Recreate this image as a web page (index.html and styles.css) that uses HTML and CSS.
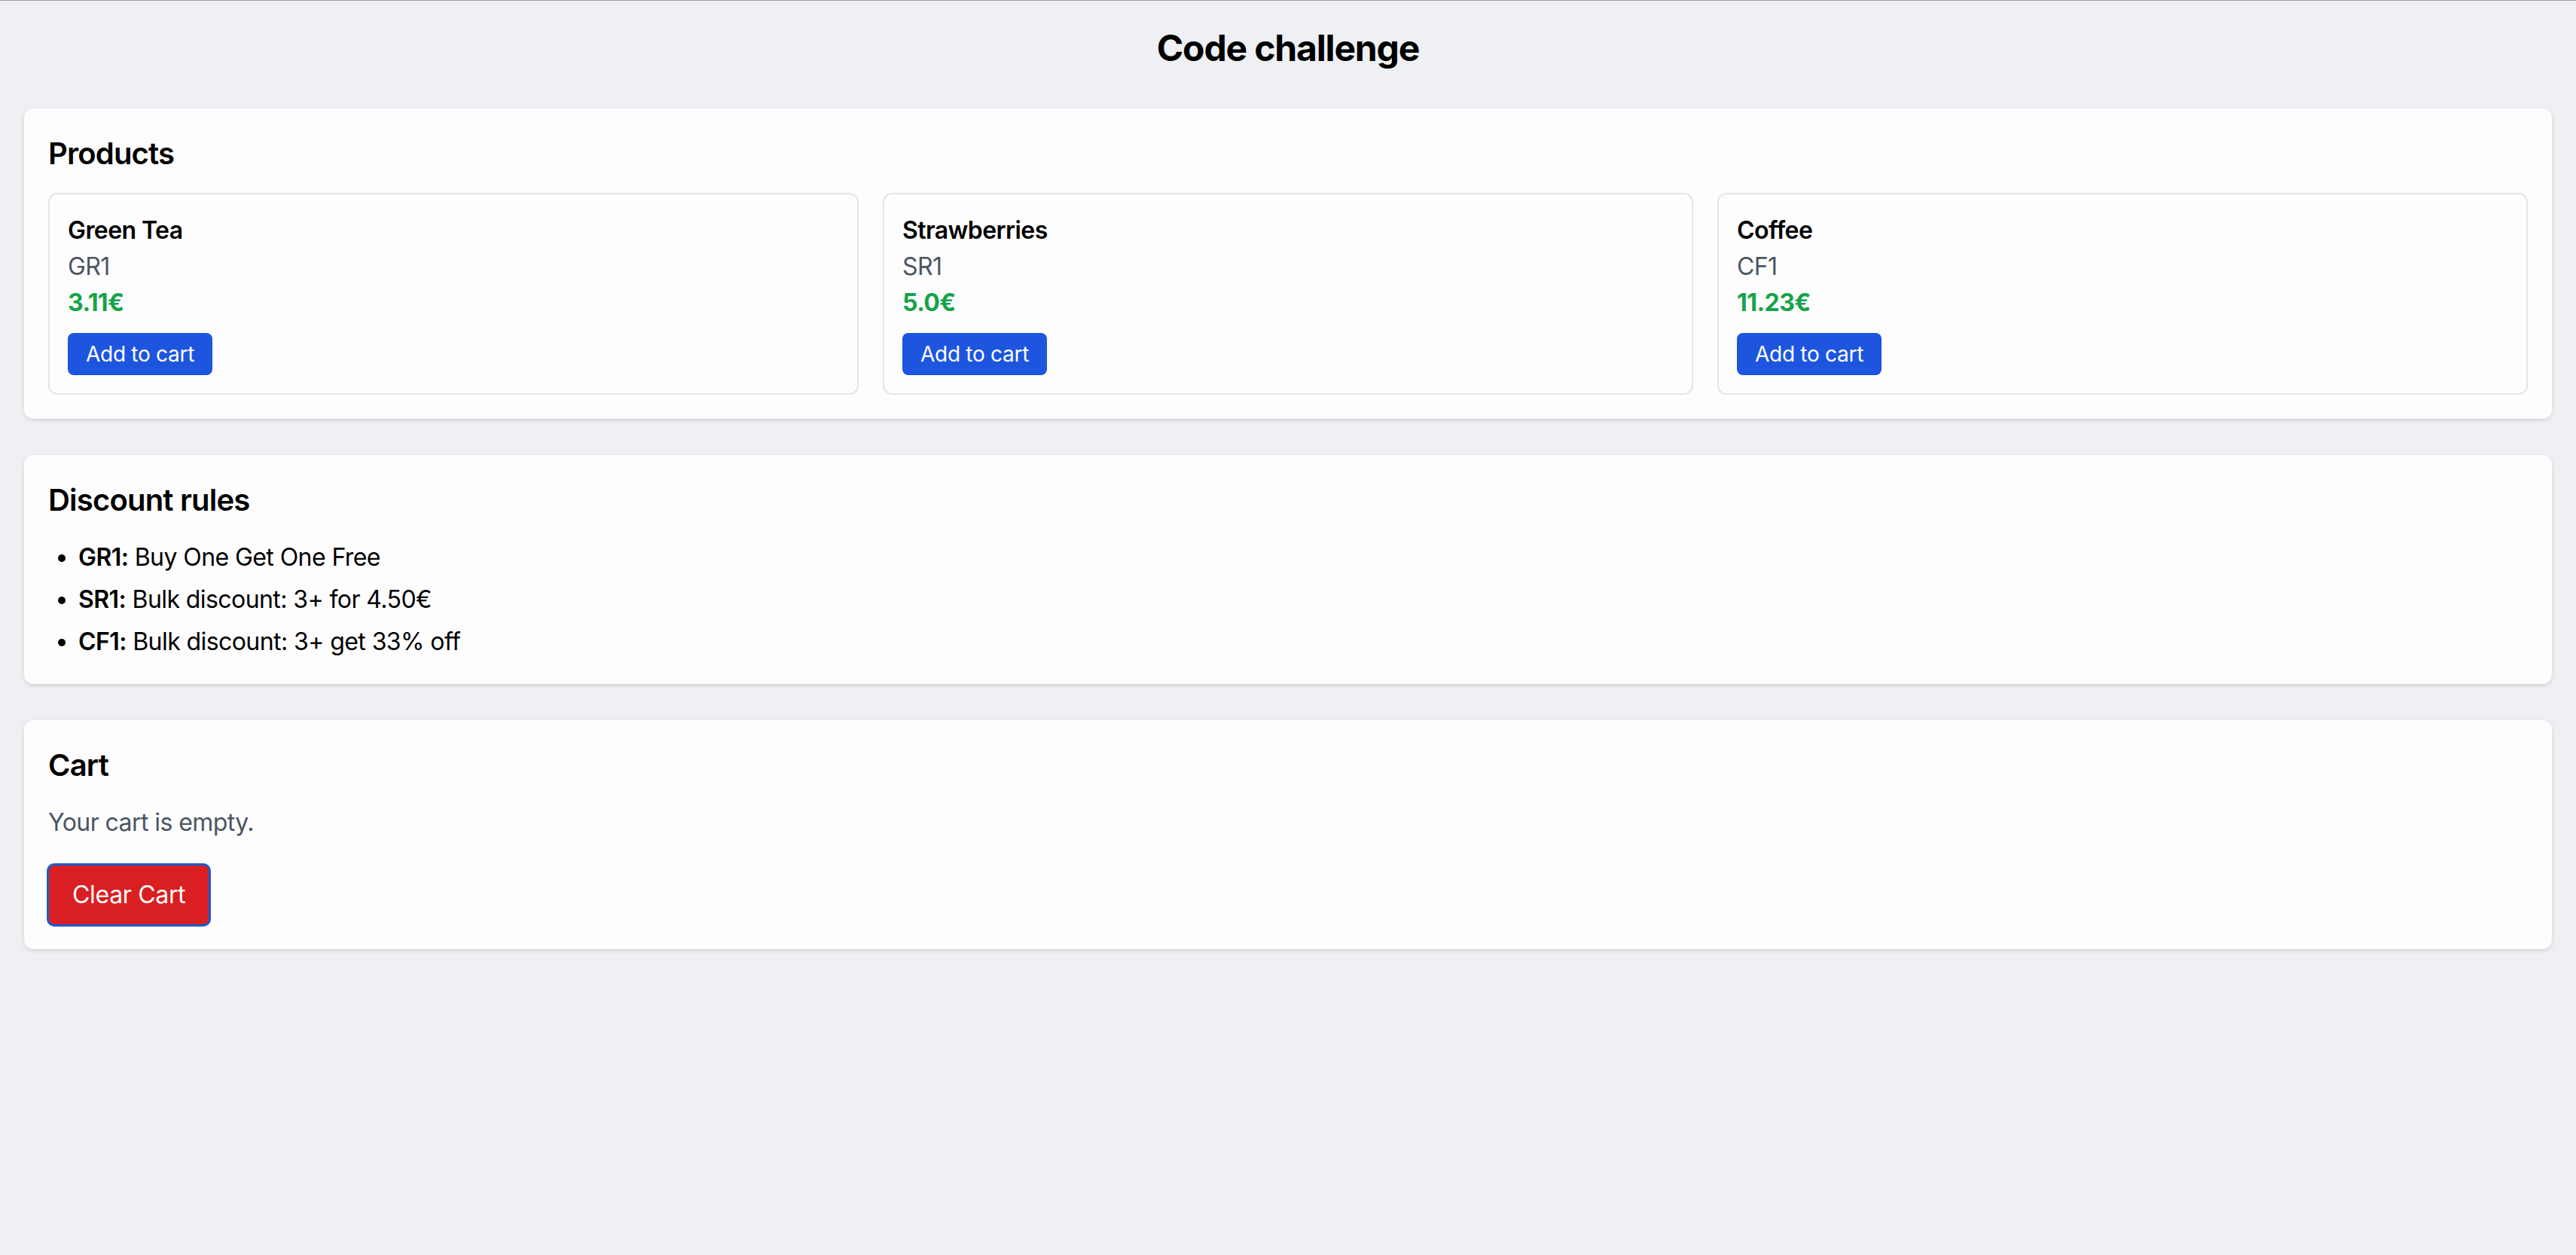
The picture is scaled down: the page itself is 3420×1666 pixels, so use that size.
FILE: index.html
```html
<!DOCTYPE html>
<html lang="en">
<head>
<meta charset="utf-8">
<title>Code challenge</title>
<link rel="stylesheet" href="styles.css">
</head>
<body>
  <main class="page">
    <h1 class="title">Code challenge</h1>

    <section class="card">
      <h2 class="card-title">Products</h2>
      <div class="product-grid">
        <div class="product">
          <div class="product-name">Green Tea</div>
          <div class="product-code">GR1</div>
          <div class="product-price">3.11€</div>
          <button class="btn-add" type="button">Add to cart</button>
        </div>
        <div class="product">
          <div class="product-name">Strawberries</div>
          <div class="product-code">SR1</div>
          <div class="product-price">5.0€</div>
          <button class="btn-add" type="button">Add to cart</button>
        </div>
        <div class="product">
          <div class="product-name">Coffee</div>
          <div class="product-code">CF1</div>
          <div class="product-price">11.23€</div>
          <button class="btn-add" type="button">Add to cart</button>
        </div>
      </div>
    </section>

    <section class="card">
      <h2 class="card-title">Discount rules</h2>
      <ul class="rules">
        <li><strong>GR1:</strong> Buy One Get One Free</li>
        <li><strong>SR1:</strong> Bulk discount: 3+ for 4.50€</li>
        <li><strong>CF1:</strong> Bulk discount: 3+ get 33% off</li>
      </ul>
    </section>

    <section class="card">
      <h2 class="card-title">Cart</h2>
      <p class="cart-empty">Your cart is empty.</p>
      <button class="btn-clear" type="button">Clear Cart</button>
    </section>
  </main>
</body>
</html>
```

FILE: styles.css
```css
html, body {
  margin: 0;
  padding: 0;
}

body {
  background: #eef0f3;
  border-top: 1px solid #9c9c9c;
  font-family: Inter, "Noto Sans", "Liberation Sans", sans-serif;
  font-size: 32px;
  line-height: 48px;
  letter-spacing: -0.018em;
  color: #000;
  min-height: 1665px;
  box-sizing: border-box;
}

.page {
  padding: 31px 32px 32px;
}

.title {
  margin: 0 0 48px;
  font-size: 48px;
  line-height: 64px;
  font-weight: 700;
  letter-spacing: -0.024em;
  text-align: center;
}

.card {
  background: #fdfdfd;
  border-radius: 12px;
  padding: 32px;
  margin-bottom: 48px;
  box-shadow: 0 2px 6px rgba(0, 0, 0, 0.1), 0 2px 4px -2px rgba(0, 0, 0, 0.1);
}

.card-title {
  margin: 0 0 24px;
  font-size: 40px;
  line-height: 56px;
  font-weight: 600;
  letter-spacing: -0.02em;
}

.product-grid {
  display: grid;
  grid-template-columns: repeat(3, 1fr);
  gap: 32px;
}

.product {
  border: 2px solid #e3e5ea;
  border-radius: 12px;
  padding: 24px;
}

.product-name {
  font-weight: 600;
}

.product-code {
  color: #4b5563;
}

.product-price {
  color: #16a34a;
  font-weight: 700;
}

.btn-add {
  display: block;
  margin-top: 16px;
  padding: 8px 24px;
  border: none;
  border-radius: 8px;
  background: #1d55df;
  color: #fff;
  font-family: inherit;
  font-size: 28px;
  line-height: 40px;
  letter-spacing: -0.01em;
  cursor: pointer;
}

.rules {
  margin: 0;
  padding-left: 40px;
}

.rules li + li {
  margin-top: 8px;
}

.rules strong {
  font-weight: 600;
}

.cart-empty {
  margin: 0;
  color: #4b5563;
}

.btn-clear {
  display: block;
  margin-top: 32px;
  padding: 16px 32px;
  border: none;
  border-radius: 8px;
  background: #d91f22;
  color: #fff;
  font-family: inherit;
  font-size: 32px;
  line-height: 48px;
  letter-spacing: -0.01em;
  outline: 3px solid #1a5bd0;
  outline-offset: -1px;
  cursor: pointer;
}
```
